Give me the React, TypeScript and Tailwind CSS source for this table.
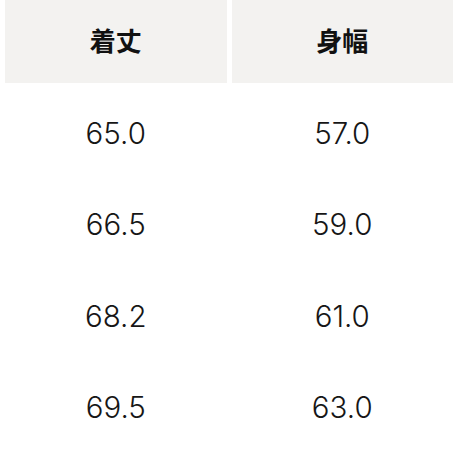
const rows = [
  ['65.0', '57.0'],
  ['66.5', '59.0'],
  ['68.2', '61.0'],
  ['69.5', '63.0'],
]

export default function App() {
  return (
    <div
      className="w-[459px] h-[459px] bg-white pl-[5px] pr-[6px] overflow-hidden"
      style={{ fontFamily: 'Inter, "Noto Sans CJK JP", sans-serif' }}
    >
      <div className="grid grid-cols-2 gap-x-[5px]">
        <div className="h-[83px] pb-[5px] bg-[#f3f2f0] flex items-center justify-center text-[26px] font-bold text-[#111]" style={{ fontFamily: '"Noto Sans CJK JP", sans-serif' }}>
          着丈
        </div>
        <div className="h-[83px] pb-[5px] bg-[#f3f2f0] flex items-center justify-center text-[26px] font-bold text-[#111]" style={{ fontFamily: '"Noto Sans CJK JP", sans-serif' }}>
          身幅
        </div>
        {rows.map((r, i) => (
          <>
            <div key={`a${i}`} className="h-[91.5px] pt-[8px] flex items-center justify-center text-[29.5px] font-light text-[#161616]">
              {r[0]}
            </div>
            <div key={`b${i}`} className="h-[91.5px] pt-[8px] flex items-center justify-center text-[29.5px] font-light text-[#161616]">
              {r[1]}
            </div>
          </>
        ))}
      </div>
    </div>
  )
}
